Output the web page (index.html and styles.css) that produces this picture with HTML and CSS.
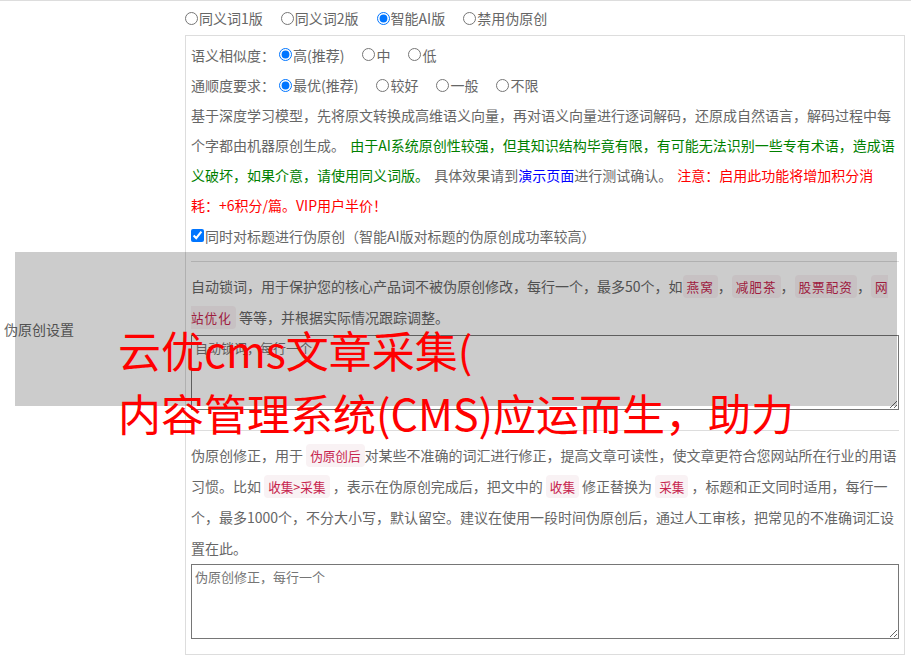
FILE: index.html
```html
<!DOCTYPE html>
<html lang="zh-CN">
<head>
<meta charset="utf-8">
<title>伪原创设置</title>
<link rel="stylesheet" href="styles.css">
</head>
<body>
<div class="row">
  <div class="label">伪原创设置</div>
  <div class="content">
    <div class="modes">
      <label class="opt"><input type="radio" name="mode">同义词1版</label>
      <label class="opt"><input type="radio" name="mode">同义词2版</label>
      <label class="opt"><input type="radio" name="mode" checked>智能AI版</label>
      <label class="opt"><input type="radio" name="mode">禁用伪原创</label>
    </div>
    <div class="box">
      <div class="top">
        <div class="line first"><span class="head">语义相似度：</span><label class="opt"><input type="radio" name="sim" checked>高(推荐)</label><label class="opt"><input type="radio" name="sim">中</label><label class="opt"><input type="radio" name="sim">低</label></div>
        <div class="line"><span class="head">通顺度要求：</span><label class="opt"><input type="radio" name="flu" checked>最优(推荐)</label><label class="opt"><input type="radio" name="flu">较好</label><label class="opt"><input type="radio" name="flu">一般</label><label class="opt"><input type="radio" name="flu">不限</label></div>
        <p class="desc">基于深度学习模型，先将原文转换成高维语义向量，再对语义向量进行逐词解码，还原成自然语言，解码过程中每个字都由机器原创生成。 <span class="green">由于AI系统原创性较强，但其知识结构毕竟有限，有可能无法识别一些专有术语，造成语义破坏，如果介意，请使用同义词版。</span> 具体效果请到<a class="blue" href="#">演示页面</a>进行测试确认。 <span class="red">注意：启用此功能将增加积分消耗：+6积分/篇。VIP用户半价！</span></p>
        <label class="line check"><input type="checkbox" checked>同时对标题进行伪原创（智能AI版对标题的伪原创成功率较高）</label>
      </div>
      <hr class="sep">
      <div class="section lock">
        <p class="desc2">自动锁词，用于保护您的核心产品词不被伪原创修改，每行一个，最多50个，如<code>燕窝</code>，<code>减肥茶</code>，<code>股票配资</code>，<code>网站优化</code> 等等，并根据实际情况跟踪调整。</p>
        <textarea class="ta" placeholder="自动锁词，每行一个"></textarea>
      </div>
      <hr class="sep">
      <div class="section">
        <p class="desc2">伪原创修正，用于 <code>伪原创后</code>对某些不准确的词汇进行修正，提高文章可读性，使文章更符合您网站所在行业的用语习惯。比如 <code>收集&gt;采集</code> ，表示在伪原创完成后，把文中的 <code>收集</code> 修正替换为 <code>采集</code> ，标题和正文同时适用，每行一个，最多1000个，不分大小写，默认留空。建议在使用一段时间伪原创后，通过人工审核，把常见的不准确词汇设置在此。</p>
        <textarea class="ta last" placeholder="伪原创修正，每行一个"></textarea>
      </div>
    </div>
  </div>
</div>
<div class="overlay"></div>
<div class="ad">云优cms文章采集(<br>内容管理系统(CMS)应运而生，助力</div>
</body>
</html>
```
FILE: styles.css
```css
html, body {
  margin: 0;
  padding: 0;
  background: #fff;
}
body {
  font-family: "Noto Sans CJK SC", "Microsoft YaHei", sans-serif;
  font-size: 14px;
  color: #666;
  width: 911px;
  overflow: hidden;
}
.row {
  display: flex;
  border-top: 1px solid #ddd;
}
.label {
  width: 181px;
  padding-left: 4px;
  padding-bottom: 5px;
  display: flex;
  align-items: center;
  line-height: 20px;
}
.content {
  flex: 1;
  padding: 6px 6px 6px 0;
}
.modes {
  height: 22px;
  line-height: 22px;
  margin-bottom: 6px;
  display: flex;
  align-items: center;
}
.opt {
  display: inline-flex;
  align-items: center;
  margin-right: 18px;
  white-space: nowrap;
}
.opt input, .check input {
  margin: 0 1px 0 0;
  width: 13px;
  height: 13px;
}
.box {
  border: 1px solid #ddd;
  padding: 3px 5px 5px 5px;
}
.top {
  line-height: 30px;
}
.line {
  display: flex;
  align-items: center;
  height: 30px;
}
.line.first {
  height: 31px;
}
.line.check {
  height: 31px;
}
.head {
  margin-right: 4px;
}
.desc {
  margin: 0;
  line-height: 30px;
  word-spacing: 2px;
}
.green { color: #008000; }
.blue { color: #0000ff; text-decoration: none; }
.red { color: #ff0000; }
.check {
  display: flex;
  align-items: center;
}
.sep {
  border: 0;
  border-top: 1px solid #ddd;
  margin: 10px 0 9px 0;
  height: 0;
}
.desc2 {
  margin: 0;
  line-height: 31px;
}
code {
  font-family: "Noto Sans CJK SC", sans-serif;
  font-size: 12.6px;
  color: #c7254e;
  background: #f9f2f4;
  border-radius: 4px;
  padding: 2px 4px;
}
.lock code {
  letter-spacing: 1px;
}
.ta {
  display: block;
  box-sizing: border-box;
  width: 100%;
  height: 75px;
  margin: 2px 0 20px 0;
  border: 1px solid #767676;
  padding: 2px 3px;
  font-family: "Noto Sans CJK SC", sans-serif;
  font-size: 13px;
  color: #333;
  resize: vertical;
}
.ta.last {
  margin: 0 0 10px 0;
}
.ta::placeholder {
  color: #757575;
}
.overlay {
  position: absolute;
  left: 15px;
  top: 252px;
  width: 882px;
  height: 154px;
  background: rgba(0, 0, 0, 0.2);
}
.ad {
  position: absolute;
  left: 118px;
  top: 318px;
  font-family: "Noto Sans CJK SC", sans-serif;
  font-size: 43px;
  line-height: 63px;
  color: #ff0000;
  white-space: nowrap;
}
```
